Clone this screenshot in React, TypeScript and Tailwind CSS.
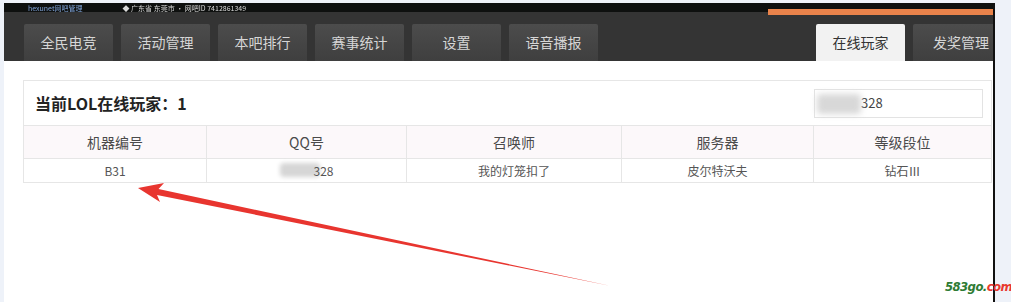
import React from 'react';

const font = { fontFamily: '"Noto Sans CJK SC", "Noto Sans", sans-serif' };

const tabs = ['全民电竞', '活动管理', '本吧排行', '赛事统计', '设置', '语音播报'];

const columns = [
  { title: '机器编号', width: 'w-[182px]' },
  { title: 'QQ号', width: 'w-[200px]' },
  { title: '召唤师', width: 'w-[215px]' },
  { title: '服务器', width: 'w-[192px]' },
  { title: '等级段位', width: 'flex-1' },
];

const Arrow: React.FC = () => (
  <svg className="absolute left-0 top-0 pointer-events-none" width="1011" height="302" viewBox="0 0 1011 302">
    <polygon
      points="138,188 164,183 158.5,189 611,286 157,195 160,202"
      fill="#e8352f"
    />
  </svg>
);

const App: React.FC = () => {
  return (
    <div className="relative w-[1011px] h-[302px] overflow-hidden bg-[#eef2f9] pt-[3px] pl-[4px] flex" style={font}>
      <div className="w-[991px] h-full flex flex-col bg-white border-r-2 border-[#111]">
        {/* top strip */}
        <div className="h-[9px] bg-[#0e100f] flex items-center text-[7px] leading-[8px]">
          <span className="ml-[24px] text-[#7fa2d6] blur-[0.6px]">hexunet网吧管理</span>
          <span className="ml-[40px] text-[#d9d9d9] blur-[0.6px]">◆ 广东省 东莞市 · 网吧ID 7412861349</span>
        </div>

        {/* nav */}
        <div className="relative h-[49px] bg-[#343434] flex items-end pl-[20px] gap-[8px]">
          <div className="absolute right-0 top-[-3px] w-[225px] h-[6px] bg-[#e9834b]" />
          {tabs.map((t) => (
            <div
              key={t}
              className="w-[89px] h-[37px] rounded-t-[2px] bg-gradient-to-b from-[#4c4c4c] to-[#3f3f3f] text-[#d6d6d6] text-[14px] flex items-center justify-center"
            >
              {t}
            </div>
          ))}
          <div className="flex-1" />
          <div className="w-[89px] h-[37px] rounded-t-[2px] bg-[#f2f2f2] text-[#333] text-[14px] flex items-center justify-center">
            在线玩家
          </div>
          <div className="w-[80px] h-[37px] rounded-tl-[2px] bg-gradient-to-b from-[#4c4c4c] to-[#3f3f3f] text-[#d6d6d6] text-[14px] flex items-center justify-end pr-[4px]">
            发奖管理
          </div>
        </div>

        {/* content */}
        <div className="flex-1 pt-[19px] pl-[19px] pr-[1px]">
          <div className="border border-[#e6e6e6]">
            <div className="h-[44px] flex items-center justify-between pl-[11px] pr-[8px]">
              <div className="text-[16px] font-bold text-[#222]">当前LOL在线玩家：1</div>
              <div className="relative w-[169px] h-[29px] border border-[#e3e3e3] flex items-center pl-[46px] text-[13px] text-[#444]">
                <div className="absolute left-[2px] top-[4px] w-[44px] h-[20px] bg-[#d8d8d8] blur-[3px] rounded" />
                328
              </div>
            </div>
            <div className="h-[33px] flex border-t border-[#e6e6e6] bg-[#fcf8fa] text-[14px] text-[#4a4a4a]">
              {columns.map((c, i) => (
                <div
                  key={c.title}
                  className={`${c.width} flex items-center justify-center ${i > 0 ? 'border-l border-[#e6e6e6]' : ''}`}
                >
                  {c.title}
                </div>
              ))}
            </div>
            <div className="h-[24px] flex border-t border-[#e6e6e6] text-[12px] text-[#555]">
              <div className="w-[182px] flex items-center justify-center">B31</div>
              <div className="w-[200px] border-l border-[#e6e6e6] flex items-center justify-center">
                <span className="relative pl-[34px]">
                  <span className="absolute left-0 top-[1px] w-[40px] h-[14px] bg-[#d6d6d6] blur-[2px] rounded" />
                  <span className="relative">328</span>
                </span>
              </div>
              <div className="w-[215px] border-l border-[#e6e6e6] flex items-center justify-center">我的灯笼扣了</div>
              <div className="w-[192px] border-l border-[#e6e6e6] flex items-center justify-center">皮尔特沃夫</div>
              <div className="flex-1 border-l border-[#e6e6e6] flex items-center justify-center">钻石Ⅲ</div>
            </div>
          </div>
        </div>
      </div>

      <Arrow />

      <div className="absolute left-[945px] top-[279px] pr-[3px] text-[13px] leading-[16px] font-semibold italic tracking-[-0.6px] whitespace-nowrap" style={{ fontFamily: '"DejaVu Sans Condensed", "Liberation Sans Narrow", sans-serif' }}>
        <span className="text-[#2e7b34]">583go.</span>
        <span className="text-[#e8392f]">com</span>
      </div>
    </div>
  );
};

export default App;
